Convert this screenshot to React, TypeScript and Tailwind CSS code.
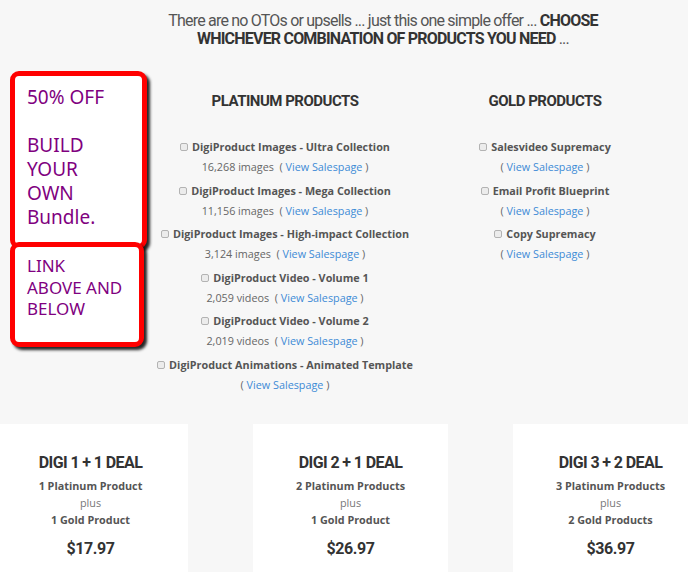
import React from "react";

type Item = { title: string; count?: string };

const platinum: Item[] = [
  { title: "DigiProduct Images - Ultra Collection", count: "16,268 images" },
  { title: "DigiProduct Images - Mega Collection", count: "11,156 images" },
  { title: "DigiProduct Images - High-impact Collection", count: "3,124 images" },
  { title: "DigiProduct Video - Volume 1", count: "2,059 videos" },
  { title: "DigiProduct Video - Volume 2", count: "2,019 videos" },
  { title: "DigiProduct Animations - Animated Template" },
];

const gold: Item[] = [
  { title: "Salesvideo Supremacy" },
  { title: "Email Profit Blueprint" },
  { title: "Copy Supremacy" },
];

const deals = [
  { name: "DIGI 1 + 1 DEAL", plat: "1 Platinum Product", gold: "1 Gold Product", price: "$17.97" },
  { name: "DIGI 2 + 1 DEAL", plat: "2 Platinum Products", gold: "1 Gold Product", price: "$26.97" },
  { name: "DIGI 3 + 2 DEAL", plat: "3 Platinum Products", gold: "2 Gold Products", price: "$36.97" },
];

const Check = () => (
  <span className="inline-block w-[8px] h-[8px] rounded-[2px] border border-[#b3b3b3] bg-[#ececec] mr-[4px] align-[0px]" />
);

const ProductItem = ({ item }: { item: Item }) => (
  <div className="mb-[3.6px] text-center text-[10.8px] leading-[20px] whitespace-nowrap">
    <div className="font-bold text-[#555]">
      <Check />
      {item.title}
    </div>
    <div className="text-[#666]">
      {item.count && <span>{item.count}&nbsp; </span>}( <span className="text-[#3d8bd6]">View Salespage</span> )
    </div>
  </div>
);

const Column = ({ title, items }: { title: string; items: Item[] }) => (
  <div className="flex flex-col items-center">
    <h2 className="font-['Roboto'] font-bold text-[15px] leading-[20px] tracking-[-0.5px] text-[#333] mb-[26px]">
      {title}
    </h2>
    {items.map((it) => (
      <ProductItem key={it.title} item={it} />
    ))}
  </div>
);

export default function App() {
  return (
    <div className="relative min-h-screen overflow-hidden bg-[#f7f7f7] font-['Open_Sans',sans-serif]">
      <p className="pt-[12px] pl-[78px] text-center font-['Roboto',sans-serif] text-[16px] leading-[17.5px] tracking-[-0.8px] text-[#555]">
        There are no OTOs or upsells ... just this one simple offer ...{" "}
        <b className="text-[#333]">CHOOSE</b>
        <br />
        <b className="text-[#333]">WHICHEVER COMBINATION OF PRODUCTS YOU NEED</b> ...
      </p>

      <div className="ml-[155px] mt-[44px] grid grid-cols-[260px_260px]">
        <Column title="PLATINUM PRODUCTS" items={platinum} />
        <Column title="GOLD PRODUCTS" items={gold} />
      </div>

      <div className="mt-[25px] ml-[-7px] flex gap-[65px]">
        {deals.map((d) => (
          <div key={d.name} className="w-[195px] shrink-0 bg-white pt-[29px] pb-[20px] text-center">
            <div className="font-['Roboto'] font-bold text-[16px] leading-[20px] tracking-[-0.6px] text-[#333]">
              {d.name}
            </div>
            <div className="mt-[4.5px] text-[10.8px] leading-[17px]">
              <div className="font-bold text-[#555]">{d.plat}</div>
              <div className="text-[#777]">plus</div>
              <div className="font-bold text-[#555]">{d.gold}</div>
            </div>
            <div className="mt-[11px] font-['Roboto'] font-bold text-[16px] leading-[20px] tracking-[-0.4px] text-[#333]">
              {d.price}
            </div>
          </div>
        ))}
      </div>

      <div className="absolute left-[10px] top-[71px] w-[137px] h-[178px] rounded-[9px] border-[5px] border-[#ff0000] bg-white shadow-[3px_3px_3px_rgba(0,0,0,0.85)] pl-[12px] pt-[9px] font-['Noto_Sans',sans-serif] text-[19px] leading-[24px] text-[#800080]">
        50% OFF
        <br />
        <br />
        BUILD
        <br />
        YOUR
        <br />
        OWN
        <br />
        Bundle.
      </div>
      <div className="absolute left-[10px] top-[242px] w-[134px] h-[105px] rounded-[9px] border-[5px] border-[#ff0000] bg-white shadow-[3px_3px_3px_rgba(0,0,0,0.85)] pl-[12px] pt-[8px] font-['Noto_Sans',sans-serif] text-[17px] leading-[21.5px] text-[#800080]">
        LINK
        <br />
        ABOVE AND
        <br />
        BELOW
      </div>
    </div>
  );
}
